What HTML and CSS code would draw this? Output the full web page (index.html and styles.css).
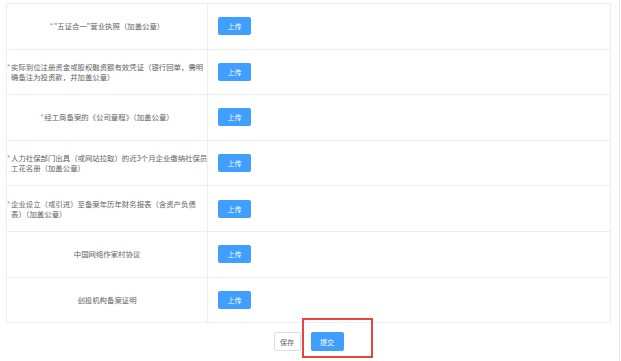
FILE: index.html
```html
<!DOCTYPE html>
<html lang="zh-CN">
<head>
  <meta charset="UTF-8">
  <meta name="viewport" content="width=device-width, initial-scale=1.0">
  <title>材料上传</title>
  <link rel="stylesheet" href="styles.css">
</head>
<body>
  <div class="page">
    <table class="upload-table">
      <colgroup>
        <col class="col-label">
        <col class="col-action">
      </colgroup>
      <tr>
        <td class="label-cell"><span class="label"><span class="req">*</span><span class="text">"五证合一"营业执照（加盖公章）</span></span></td>
        <td class="action-cell"><button class="btn-upload">上传</button></td>
      </tr>
      <tr>
        <td class="label-cell"><span class="label multi"><span class="req">*</span><span class="text">实际到位注册资金或股权融资额有效凭证（银行回单，需明<br>确备注为投资款，并加盖公章）</span></span></td>
        <td class="action-cell"><button class="btn-upload">上传</button></td>
      </tr>
      <tr>
        <td class="label-cell"><span class="label"><span class="req">*</span><span class="text">经工商备案的《公司章程》（加盖公章）</span></span></td>
        <td class="action-cell"><button class="btn-upload">上传</button></td>
      </tr>
      <tr>
        <td class="label-cell"><span class="label multi"><span class="req">*</span><span class="text">人力社保部门出具（或网站拉取）的近3个月企业缴纳社保员<br>工花名册（加盖公章）</span></span></td>
        <td class="action-cell"><button class="btn-upload">上传</button></td>
      </tr>
      <tr>
        <td class="label-cell"><span class="label multi"><span class="req">*</span><span class="text">企业设立（或引进）至备案年历年财务报表（含资产负债<br>表）（加盖公章）</span></span></td>
        <td class="action-cell"><button class="btn-upload">上传</button></td>
      </tr>
      <tr>
        <td class="label-cell"><span class="label"><span class="text">中国网络作家村协议</span></span></td>
        <td class="action-cell"><button class="btn-upload">上传</button></td>
      </tr>
      <tr>
        <td class="label-cell"><span class="label"><span class="text">创投机构备案证明</span></span></td>
        <td class="action-cell"><button class="btn-upload">上传</button></td>
      </tr>
    </table>

    <div class="actions">
      <button class="btn btn-save">保存</button>
      <button class="btn btn-submit">提交</button>
    </div>

    <div class="highlight"></div>
  </div>
</body>
</html>
```

FILE: styles.css
```css
body { margin: 0; background: #fff; font-family: "Noto Sans CJK SC", "Noto Sans", sans-serif; color: #606266; }
.page { position: relative; width: 620px; height: 361px; padding: 3px 0 0 6px; box-sizing: border-box; border-right: 1px solid #e8e8ea; }

.upload-table { width: 605px; border-collapse: collapse; table-layout: fixed; font-size: 7.4px; line-height: 10px; }
.col-label { width: 201px; }
.upload-table td { border: 1px solid #ebeef5; height: 44.6px; padding: 0; }
.label-cell { text-align: center; }
.label { display: inline-flex; vertical-align: top; text-align: left; white-space: nowrap; }
.label.multi { display: flex; }
.req { flex: none; width: 4px; color: #f56c6c; }
.action-cell { padding-left: 10px !important; }

.btn-upload { display: block; width: 33px; height: 18px; padding: 0; border: none; border-radius: 2px; background: #409eff; color: #fff; font-family: inherit; font-size: 7px; cursor: pointer; }

.actions { display: flex; justify-content: center; gap: 10px; width: 605px; margin-top: 9px; }
.btn { height: 19px; padding: 0; border-radius: 2px; font-family: inherit; font-size: 7px; cursor: pointer; }
.btn-save { width: 27px; background: #fff; border: 1px solid #dcdfe6; color: #606266; }
.btn-submit { width: 33px; background: #409eff; border: none; color: #fff; }

.highlight { position: absolute; left: 302px; top: 318px; width: 67px; height: 36px; border: 2px solid #e8453c; }
```
